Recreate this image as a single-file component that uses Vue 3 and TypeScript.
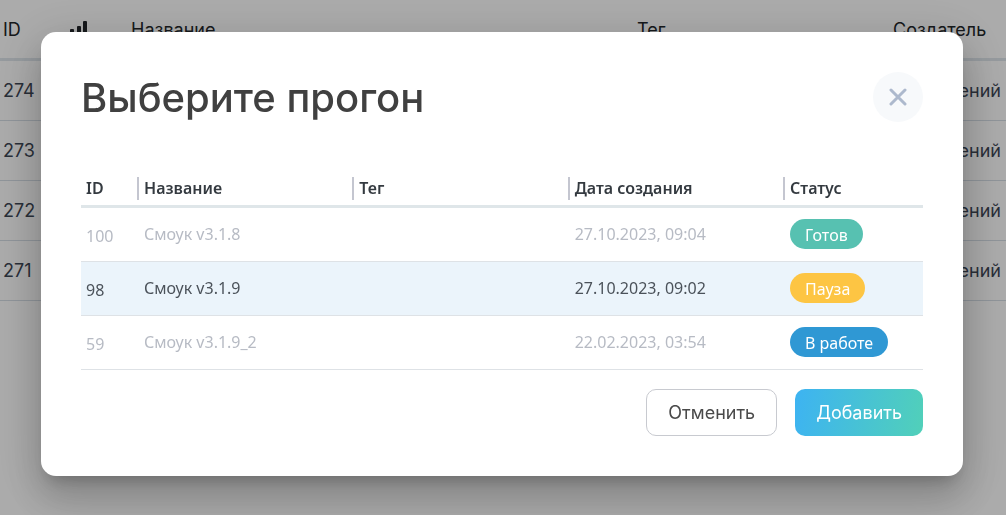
<script setup lang="ts">
interface BackgroundRow {
  id: number
  creator: string
}

interface Run {
  id: number
  name: string
  tag: string
  created: string
  status: string
  kind: 'ready' | 'paused' | 'working'
  active: boolean
}

const rows: BackgroundRow[] = [
  { id: 274, creator: 'Евгений' },
  { id: 273, creator: 'Евгений' },
  { id: 272, creator: 'Евгений' },
  { id: 271, creator: 'Евгений' },
]

const runs: Run[] = [
  { id: 100, name: 'Смоук v3.1.8', tag: '', created: '27.10.2023, 09:04', status: 'Готов', kind: 'ready', active: false },
  { id: 98, name: 'Смоук v3.1.9', tag: '', created: '27.10.2023, 09:02', status: 'Пауза', kind: 'paused', active: true },
  { id: 59, name: 'Смоук v3.1.9_2', tag: '', created: '22.02.2023, 03:54', status: 'В работе', kind: 'working', active: false },
]
</script>

<template>
  <div class="page">
    <table class="cases">
      <colgroup>
        <col class="cases-id" />
        <col class="cases-priority" />
        <col />
        <col class="cases-tag" />
        <col class="cases-creator" />
      </colgroup>
      <thead>
        <tr>
          <th>ID</th>
          <th>
            <svg class="bars" viewBox="0 0 18 18" role="img" aria-label="Приоритет">
              <rect x="0" y="8" width="4" height="9" rx="1" />
              <rect x="7" y="5" width="4" height="12" rx="1" />
              <rect x="13" y="0" width="4" height="17" rx="1" />
            </svg>
          </th>
          <th>Название</th>
          <th>Тег</th>
          <th>Создатель</th>
        </tr>
      </thead>
      <tbody>
        <tr v-for="row in rows" :key="row.id">
          <td>{{ row.id }}</td>
          <td></td>
          <td></td>
          <td></td>
          <td class="creator">{{ row.creator }}</td>
        </tr>
      </tbody>
    </table>

    <div class="overlay">
      <section class="dialog" role="dialog" aria-modal="true" aria-labelledby="dialog-title">
        <header class="dialog-head">
          <h1 id="dialog-title">Выберите прогон</h1>
          <button class="close" type="button" aria-label="Закрыть">
            <svg viewBox="0 0 18 18" aria-hidden="true">
              <path d="M2 2 L16 16 M16 2 L2 16" />
            </svg>
          </button>
        </header>

        <table class="runs">
          <colgroup>
            <col class="runs-id" />
            <col />
            <col />
            <col />
            <col class="runs-status" />
          </colgroup>
          <thead>
            <tr>
              <th><span>ID</span></th>
              <th><span>Название</span></th>
              <th><span>Тег</span></th>
              <th><span>Дата создания</span></th>
              <th><span>Статус</span></th>
            </tr>
          </thead>
          <tbody>
            <tr v-for="run in runs" :key="run.id" :class="{ active: run.active }">
              <td class="run-id">{{ run.id }}</td>
              <td>{{ run.name }}</td>
              <td>{{ run.tag }}</td>
              <td>{{ run.created }}</td>
              <td><span class="pill" :class="run.kind">{{ run.status }}</span></td>
            </tr>
          </tbody>
        </table>

        <footer class="actions">
          <button class="btn cancel" type="button">Отменить</button>
          <button class="btn add" type="button">Добавить</button>
        </footer>
      </section>
    </div>
  </div>
</template>

<style>
body {
  margin: 0;
  background: #fff;
}
</style>

<style scoped>
.page {
  min-height: 100vh;
  overflow: hidden;
  font-family: Inter, "Liberation Sans", sans-serif;
  font-size: 18px;
  color: #3d4654;
}

table {
  width: 100%;
  table-layout: fixed;
  border-collapse: separate;
  border-spacing: 0;
}

th,
td {
  box-sizing: border-box;
  padding: 0;
  text-align: left;
}

.cases-id {
  width: 67px;
}

.cases-priority {
  width: 61px;
}

.cases-tag {
  width: 256px;
}

.cases-creator {
  width: 116px;
}

.cases th {
  height: 61px;
  padding-left: 3px;
  border-bottom: 3px solid #dfe6ec;
  font-weight: 400;
  color: #212529;
}

.cases td {
  height: 60px;
  padding-left: 3px;
  border-bottom: 1px solid #d6dee6;
}

.cases td.creator {
  padding-right: 5px;
  text-align: right;
}

.bars {
  display: block;
  width: 18px;
  height: 18px;
  margin-top: 2px;
  fill: #212529;
}

.overlay {
  position: fixed;
  inset: 0;
  padding: 32px 43px 32px 41px;
  background: rgba(0, 0, 0, 0.33);
}

.dialog {
  padding: 40px;
  border-radius: 15px;
  background: #fff;
  box-shadow:
    0 11px 15px -7px rgba(0, 0, 0, 0.2),
    0 24px 38px 3px rgba(0, 0, 0, 0.14),
    0 9px 46px 8px rgba(0, 0, 0, 0.12);
}

.dialog-head {
  display: flex;
  align-items: center;
  justify-content: space-between;
}

h1 {
  margin: 0;
  padding-top: 2px;
  font-size: 40px;
  line-height: 48px;
  font-weight: 500;
  color: #404040;
}

.close {
  display: flex;
  align-items: center;
  justify-content: center;
  width: 50px;
  height: 50px;
  padding: 0;
  border: 0;
  border-radius: 50%;
  background: #f7f9fb;
}

.close svg {
  width: 18px;
  height: 18px;
  fill: none;
  stroke: #adb9cd;
  stroke-width: 3;
  stroke-linecap: round;
}

.runs {
  margin-top: 46px;
  font-family: "Noto Sans", "Open Sans", sans-serif;
  font-size: 16px;
  color: #b7bbc4;
}

.runs-id {
  width: 56px;
}

.runs-status {
  width: 140px;
}

.runs th {
  height: 40px;
  padding-top: 4px;
  border-bottom: 3px solid #dfe6e9;
  font-weight: 600;
  color: #343a40;
}

.runs th span {
  display: block;
  padding-left: 5px;
  border-left: 2px solid #c4c6d0;
  line-height: 23px;
}

.runs th:first-child span {
  border-left: 0;
}

.runs td {
  height: 54px;
  padding-bottom: 1px;
  padding-left: 7px;
  border-bottom: 1px solid #dee2e6;
}

.runs td.run-id {
  padding-top: 3px;
  padding-left: 5px;
}

.runs tr.active td {
  background: #ebf4fb;
  color: #4b525a;
}

.pill {
  display: block;
  box-sizing: border-box;
  width: fit-content;
  height: 30px;
  padding: 3px 15px 0;
  border-radius: 15px;
  line-height: 27px;
  color: #fff;
}

.ready {
  background: #57c1b1;
}

.paused {
  background: #fdc543;
}

.working {
  background: #2f98d4;
}

.actions {
  display: flex;
  justify-content: flex-end;
  gap: 18px;
  margin-top: 19px;
}

.btn {
  height: 47px;
  padding: 0 21px;
  border: 0;
  border-radius: 10px;
  font-family: inherit;
  font-size: 18px;
}

.cancel {
  border: 1px solid #c8cad0;
  background: #fff;
  color: #4a4a4a;
}

.add {
  background: linear-gradient(100deg, #3db3f2, #51d0b9);
  color: #fff;
}
</style>
